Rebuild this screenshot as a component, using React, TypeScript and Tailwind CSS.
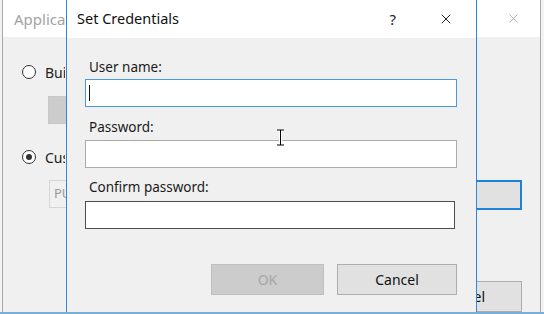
import { X } from "lucide-react";

const font = "font-['Noto_Sans','Open_Sans',sans-serif]";

const Radio = ({ checked }: { checked?: boolean }) => (
  <span className="flex h-[14px] w-[14px] shrink-0 items-center justify-center rounded-full border border-[#333333] bg-white">
    {checked && <span className="h-[6px] w-[6px] rounded-full bg-[#333333]" />}
  </span>
);

// only the left strip of these texts shows past the front dialog
const Clip = ({ w, children }: { w: string; children: React.ReactNode }) => (
  <span className={`overflow-hidden whitespace-nowrap ${w}`}>{children}</span>
);

const BackWindow = () => (
  <div className="absolute left-[2px] top-0 flex h-[312px] w-[539px] flex-col border-x border-[#a8a8a8] bg-[#f0f0f0]">
    <div className="flex h-[38px] items-center justify-between bg-white pl-[11px] pr-[19px]">
      <Clip w="w-[52px]">
        <span className="text-[15px] text-[#a3a3a3]">Application Pool Identity</span>
      </Clip>
      <X className="h-[15px] w-[15px] text-[#9a9a9a]" strokeWidth={1.2} />
    </div>
    <div className="flex flex-1 flex-col pl-[19px] pr-[18px]">
      <div className="mt-[23px] flex items-center gap-[9px]">
        <Radio />
        <Clip w="w-[20px]">
          <span className="text-[14px] text-[#222]">Built-in account:</span>
        </Clip>
      </div>
      <div className="ml-[26px] mt-[12px] h-[28px] w-[300px] border border-[#c8c8c8] bg-[#cccccc]" />
      <div className="mt-[21px] flex items-center gap-[9px]">
        <Radio checked />
        <Clip w="w-[20px]">
          <span className="text-[14px] text-[#222]">Custom account:</span>
        </Clip>
      </div>
      <div className="ml-[27px] mt-[11px] flex items-start justify-between">
        <div className="flex h-[28px] w-[330px] items-center border border-[#d6d6d6] bg-[#f0f0f0] pl-[4px] text-[13px] text-[#9a9a9a]">
          <Clip w="w-[14px]">PUBLIC</Clip>
        </div>
        <div className="h-[30px] w-[110px] border-2 border-[#1c82dc] bg-[#e1e1e1]" />
      </div>
      <div className="mt-[71px] flex justify-end gap-[13px]">
        <div className="h-[31px] w-[112px] border border-[#adadad] bg-[#e1e1e1]" />
        <div className="flex h-[31px] w-[112px] items-center justify-end border border-[#adadad] bg-[#e1e1e1] pr-[36px] text-[14px] text-[#111]">
          <span className="flex w-[9px] justify-end overflow-hidden whitespace-nowrap">Cancel</span>
        </div>
      </div>
    </div>
  </div>
);

const Field = ({ label, className, children }: { label: string; className: string; children?: React.ReactNode }) => (
  <>
    <span className="pl-[4px] text-[13.5px] leading-[18px] text-[#1a1a1a]">{label}</span>
    <div className={`flex h-[28px] items-center bg-white ${className}`}>{children}</div>
  </>
);

const CredentialsDialog = () => (
  <div className="absolute left-[66px] top-0 flex h-[330px] w-[411px] flex-col border-x border-[#2f86d6] bg-[#f0f0f0]">
    <div className="flex h-[38px] items-center bg-white pl-[10px] pr-[22px]">
      <span className="text-[14.5px] text-[#111]">Set Credentials</span>
      <span className="ml-auto mr-[42px] text-[15px] text-[#222]">?</span>
      <X className="h-[16px] w-[16px] text-[#111]" strokeWidth={1.4} />
    </div>
    <div className="flex flex-col pl-[18px] pr-[18px] pt-[20px]">
      <Field label="User name:" className="mt-[3px] w-[372px] border border-[#4a98dc]">
        <span className="ml-[3px] h-[16px] w-[1px] bg-[#111]" />
      </Field>
      <div className="h-[11px]" />
      <Field label="Password:" className="mt-[4px] w-[372px] border border-[#ababab]" />
      <div className="h-[10px]" />
      <Field label="Confirm password:" className="mt-[5px] w-[370px] border border-[#4d4d4d]" />
      <div className="mt-[35px] flex justify-end gap-[13px] pr-[1px]">
        <div className="flex h-[31px] w-[113px] items-center justify-center border border-[#bfbfbf] bg-[#cccccc] text-[14px] text-[#a6a6a6]">
          OK
        </div>
        <div className="flex h-[31px] w-[120px] items-center justify-center border border-[#adadad] bg-[#e1e1e1] text-[14px] text-[#111]">
          Cancel
        </div>
      </div>
    </div>
  </div>
);

const IBeam = () => (
  <svg className="absolute left-[276px] top-[129px]" width="9" height="17" viewBox="0 0 9 17">
    <path d="M1 1h7M1 16h7M4.5 1v15" stroke="#fff" strokeWidth="3" fill="none" />
    <path d="M1 1h7M1 16h7M4.5 1v15" stroke="#000" strokeWidth="1" fill="none" />
  </svg>
);

export default function App() {
  return (
    <div className={`relative h-[314px] w-[544px] overflow-hidden bg-[#f3f3f3] ${font}`}>
      <BackWindow />
      <CredentialsDialog />
      <IBeam />
      <div className="absolute bottom-0 left-0 h-[2px] w-full bg-[#7aaed4]" />
    </div>
  );
}
